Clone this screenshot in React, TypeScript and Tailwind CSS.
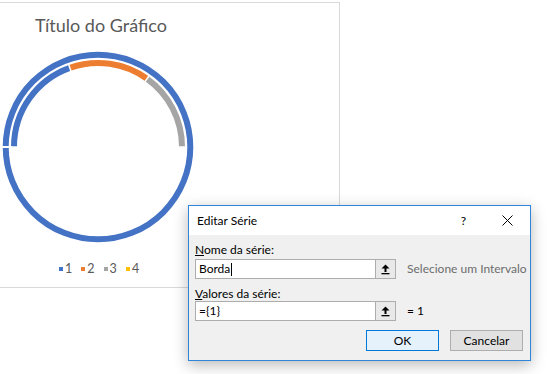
import React from "react"

const CX = 98
const CY = 110

function pt(r: number, a: number) {
  const rad = (a * Math.PI) / 180
  return [CX + r * Math.sin(rad), CY - r * Math.cos(rad)]
}

function arc(r: number, a0: number, a1: number) {
  const [x0, y0] = pt(r, a0)
  const [x1, y1] = pt(r, a1)
  const large = a1 - a0 > 180 ? 1 : 0
  return `M ${x0} ${y0} A ${r} ${r} 0 ${large} 1 ${x1} ${y1}`
}

function radial(a: number, r0: number, r1: number) {
  const [x0, y0] = pt(r0, a)
  const [x1, y1] = pt(r1, a)
  return `M ${x0} ${y0} L ${x1} ${y1}`
}

function Donut() {
  return (
    <svg width="200" height="210" className="block">
      <circle cx={CX} cy={CY} r={92.3} fill="none" stroke="#4472c4" strokeWidth={6} />
      <path d={arc(84, -90, -19.6)} fill="none" stroke="#4472c4" strokeWidth={6} />
      <path d={arc(84, -19.6, 35.7)} fill="none" stroke="#ed7d31" strokeWidth={6} />
      <path d={arc(84, 35.7, 90)} fill="none" stroke="#a5a5a5" strokeWidth={6} />
      <path d={radial(-90, 86, 97)} stroke="#fff" strokeWidth={2} />
      <path d={radial(-90, 78, 89)} stroke="#fff" strokeWidth={1.5} />
      <path d={radial(-19.6, 78, 88)} stroke="#fff" strokeWidth={1.5} />
      <path d={radial(35.7, 78, 88)} stroke="#fff" strokeWidth={1.5} />
      <path d={radial(90, 78, 88)} stroke="#fff" strokeWidth={1.5} />
    </svg>
  )
}

const legend = [
  { label: "1", color: "bg-[#4472c4]" },
  { label: "2", color: "bg-[#ed7d31]" },
  { label: "3", color: "bg-[#a5a5a5]" },
  { label: "4", color: "bg-[#ffc000]" },
]

function UploadIcon() {
  return (
    <svg width="9" height="11" viewBox="0 0 9 11">
      <path d="M4.5 0.5 L8.5 4.5 L5.5 4.5 L5.5 8 L3.5 8 L3.5 4.5 L0.5 4.5 Z" fill="#000" />
      <rect x="0.5" y="9" width="8" height="1.3" fill="#000" />
    </svg>
  )
}

function RangeInput({ value, cursor }: { value: string; cursor?: boolean }) {
  return (
    <div className="flex h-[20px] w-[201px] shrink-0 border border-[#adadad] bg-white">
      <div className="flex flex-1 items-center pl-[3px] text-[12px] text-black">
        {value}
        {cursor && <span className="ml-[1px] inline-block h-[13px] w-[1px] bg-black" />}
      </div>
      <div className="flex w-[20px] items-center justify-center border-l border-[#adadad] bg-[#e9e9e9]">
        <UploadIcon />
      </div>
    </div>
  )
}

export default function App() {
  return (
    <div className="relative h-[374px] w-[547px] overflow-hidden bg-white font-['Lato','Liberation_Sans',sans-serif]">
      <div className="mt-[2px] flex h-[286px] w-[340px] flex-col border-b border-r border-t border-[#d9d9d9]">
        <div className="pl-[35px] pt-[10px] text-[18px] leading-[24px] text-[#595959]">Título do Gráfico</div>
        <Donut />
        <div className="mt-[14px] flex pl-[59px] text-[12.5px] leading-[16px] text-[#595959]">
          {legend.map((l) => (
            <div key={l.label} className="flex w-[22.3px] items-center">
              <span className={`h-[4px] w-[4px] ${l.color}`} />
              <span className="ml-[2px]">{l.label}</span>
            </div>
          ))}
        </div>
      </div>

      <div className="absolute left-[188px] top-[205px] flex h-[156px] w-[343px] flex-col border border-[#2f86d8] bg-[#f0f0f0] shadow-[0_4px_14px_rgba(0,0,0,0.28)]">
        <div className="flex h-[29px] items-center bg-white text-[12px] text-black">
          <span className="ml-[8px] flex-1">Editar Série</span>
          <span className="mr-[36px]">?</span>
          <svg width="11" height="11" viewBox="0 0 11 11" className="mr-[17px]">
            <path d="M0.5 0.5 L10.5 10.5 M10.5 0.5 L0.5 10.5" stroke="#000" strokeWidth="1" />
          </svg>
        </div>
        <div className="flex flex-1 flex-col whitespace-nowrap px-[6px] text-[12px] leading-[16px] text-black">
          <div className="mt-[7px]">
            <span className="underline">N</span>ome da série:
          </div>
          <div className="mt-[1px] flex items-center">
            <RangeInput value="Borda" cursor />
            <span className="ml-[11px] text-[#6d6d6d]">Selecione um Intervalo</span>
          </div>
          <div className="mt-[7px]">
            <span className="underline">V</span>alores da série:
          </div>
          <div className="mt-[-1px] flex items-center">
            <RangeInput value="={1}" />
            <span className="ml-[11px]">= 1</span>
          </div>
          <div className="mt-[9px] flex justify-end gap-[11px] pr-[1px]">
            <div className="flex h-[21px] w-[73px] items-center justify-center border border-[#0078d7] bg-[#e5f1fb]">OK</div>
            <div className="flex h-[21px] w-[73px] items-center justify-center border border-[#adadad] bg-[#e1e1e1]">Cancelar</div>
          </div>
        </div>
      </div>
    </div>
  )
}
